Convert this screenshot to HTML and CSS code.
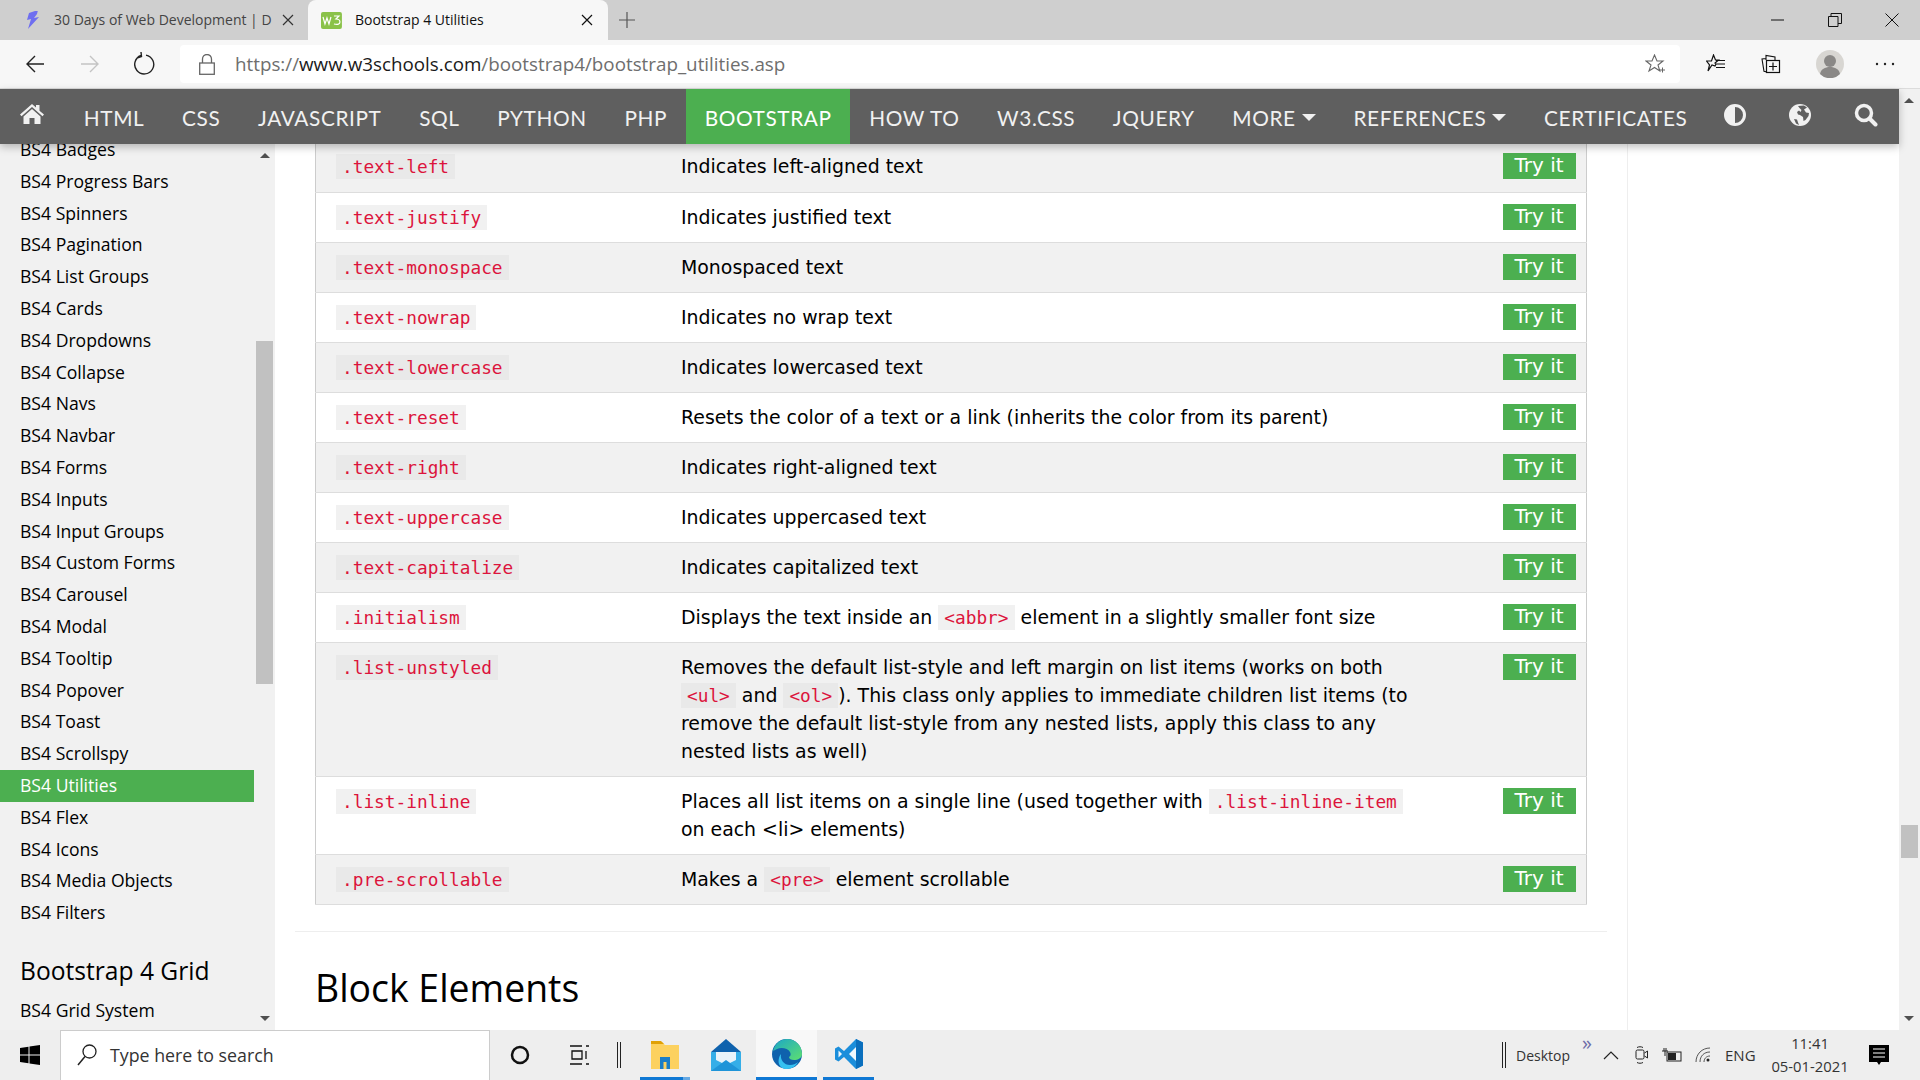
FILE: index.html
```html
<!DOCTYPE html>
<html>
<head>
  <meta charset="utf-8"/>
  <title>Bootstrap 4 Utilities</title>
  <link rel="stylesheet" href="styles.css">
</head>
<body>
  <!-- Browser tab strip -->
  <div class="tabstrip">
    <div class="tab">
      <svg class="tab-icon" width="14" height="18" viewBox="0 0 14 18"><path d="M9 0L3 2 1 9l4-1-3 10 11-12-5 1 3-4 1-4z" fill="#6f6ff0"/></svg>
      <span class="tab-title">30 Days of Web Development | D</span>
      <svg class="tab-close" width="12" height="12" viewBox="0 0 12 12"><path d="M1 1l10 10M11 1L1 11" stroke="#333" stroke-width="1.2"/></svg>
    </div>
    <div class="tab tab-active">
      <svg class="tab-icon" width="21" height="17" viewBox="0 0 21 17"><rect width="21" height="17" rx="2" fill="#8ac249"/><path d="M2 5l2 7 2-6 2 6 2-7M13 4h5l-3 3c3 0 4 1 4 3s-2 3-6 2" fill="none" stroke="#fff" stroke-width="1.2"/></svg>
      <span class="tab-title">Bootstrap 4 Utilities</span>
      <svg class="tab-close" width="12" height="12" viewBox="0 0 12 12"><path d="M1 1l10 10M11 1L1 11" stroke="#111" stroke-width="1.2"/></svg>
    </div>
    <svg class="new-tab" width="16" height="16" viewBox="0 0 16 16"><path d="M8 0v16M0 8h16" stroke="#555" stroke-width="1.2"/></svg>
    <div class="window-btns">
      <svg width="14" height="14" viewBox="0 0 14 14"><path d="M0 7h13" stroke="#111" stroke-width="1"/></svg>
      <svg width="14" height="14" viewBox="0 0 14 14"><path d="M.5 3.5h9.500v10h-9.500zM3 3.500v-3h10.500v10h-3.500" fill="none" stroke="#111"/></svg>
      <svg width="14" height="14" viewBox="0 0 14 14"><path d="M.5.5l13 13M13.500.5l-13 13" stroke="#111"/></svg>
    </div>
  </div>

  <!-- Address bar -->
  <div class="toolbar">
    <svg class="tool-btn" width="20" height="20" viewBox="0 0 20 20"><path d="M19 10H2M10 2l-8 8 8 8" fill="none" stroke="#222" stroke-width="1.400"/></svg>
    <svg class="tool-btn" width="20" height="20" viewBox="0 0 20 20"><path d="M1 10h17M10 2l8 8-8 8" fill="none" stroke="#c4c4c4" stroke-width="1.400"/></svg>
    <svg class="tool-btn" width="22" height="24" viewBox="0 0 22 24"><path d="M7 3.500a9.500 9.500 0 1 0 5-.4M7 0l.5 4.500L3 6" fill="none" stroke="#222" stroke-width="1.400"/></svg>
    <div class="address">
      <svg class="lock" width="16" height="21" viewBox="0 0 16 21"><path d="M3.500 9V5a4.500 4.500 0 0 1 9 0v4" fill="none" stroke="#666" stroke-width="1.300"/><rect x=".7" y="9" width="14.600" height="11.300" fill="none" stroke="#666" stroke-width="1.300"/></svg>
      <span class="url"><span class="url-dim">https://</span>www.w3schools.com<span class="url-dim">/bootstrap4/bootstrap_utilities.asp</span></span>
      <svg class="fav-star" width="20" height="20" viewBox="0 0 20 20"><path d="M9.500 1l2.500 6h6l-5 4 1.800 6-5.300-3.500L4 17l2-6-5-4h6z" fill="none" stroke="#666" stroke-width="1.100"/><path d="M15 16h5M17.500 13.500v5" stroke="#666"/></svg>
    </div>
    <div class="toolbar-right">
      <svg width="20" height="20" viewBox="0 0 20 20"><path d="M7.500 1l2 5h3l-3.500 3 1 1-1 2-3-1-4 6 1.500-6L.5 7h5zM10 6.500h9M10 10h9M10 13.500h9" fill="none" stroke="#111" stroke-width="1.200"/></svg>
      <svg width="20" height="20" viewBox="0 0 20 20"><path d="M5 6V1.500l9 1.500v3M6 18l-3-.7L1 5l4-.5" fill="none" stroke="#111" stroke-width="1.100"/><rect x="5.500" y="6.500" width="13" height="12" fill="none" stroke="#111" stroke-width="1.200"/><path d="M12 8.500v8M8 12.500h8" stroke="#111" stroke-width="1.200"/></svg>
      <svg width="28" height="28" viewBox="0 0 28 28"><circle cx="14" cy="14" r="14" fill="#d8d6d2"/><circle cx="14" cy="11" r="6" fill="#8a8886"/><path d="M4 24c1-5 5-7 10-7s9 2 10 7a14 14 0 0 1-20 0z" fill="#8a8886"/></svg>
      <svg width="20" height="4" viewBox="0 0 20 4"><circle cx="2" cy="2" r="1.200" fill="#222"/><circle cx="10" cy="2" r="1.200" fill="#222"/><circle cx="18" cy="2" r="1.200" fill="#222"/></svg>
    </div>
  </div>

  <div class="viewport">
    <div class="page">
      <!-- Site navigation -->
      <div class="topnav">
        <a class="nav-home"><svg width="24" height="20" viewBox="0 0 24 20"><path d="M12 0l4 3.600V1h3.500v5.700L24 10.600l-1.500 1.700L12 3 1.500 12.300 0 10.600z" fill="#f1f1f1"/><path d="M3.500 12.500L12 5l8.500 7.500V20H14.500v-6h-5v6h-6z" fill="#f1f1f1"/></svg></a>
        <a>HTML</a>
        <a>CSS</a>
        <a>JAVASCRIPT</a>
        <a>SQL</a>
        <a>PYTHON</a>
        <a>PHP</a>
        <a class="active">BOOTSTRAP</a>
        <a>HOW TO</a>
        <a>W3.CSS</a>
        <a>JQUERY</a>
        <a>MORE <span class="caret"></span></a>
        <a>REFERENCES <span class="caret"></span></a>
        <a>CERTIFICATES</a>
        <div class="nav-icons">
          <svg width="22" height="22" viewBox="0 0 22 22"><circle cx="11" cy="11" r="9.500" fill="none" stroke="#f1f1f1" stroke-width="3"/><path d="M11 1a10 10 0 0 0 0 20z" fill="#f1f1f1"/></svg>
          <svg width="22" height="22" viewBox="0 0 22 22"><circle cx="11" cy="11" r="11" fill="#f1f1f1"/><path d="M9 2l6-.5 3 2-3 2 2 3 3 .5-.5 3-3 4-2 1-.5-4-3-2-2-.5-1-2.500 2-1.500 1.500 1.500 1-2-2-2zM5 15l3 .5 1 3 1 2.500-3-1.500z" fill="#5f5f5f"/></svg>
          <svg width="24" height="24" viewBox="0 0 24 24"><circle cx="10" cy="10" r="7.500" fill="none" stroke="#f1f1f1" stroke-width="3.500"/><path d="M15.500 15.500l6 6" stroke="#f1f1f1" stroke-width="4" stroke-linecap="round"/></svg>
        </div>
      </div>

      <div class="page-body">
        <!-- Left menu -->
        <div class="sidebar">
          <div class="side-list">
            <a>BS4 Badges</a>
            <a>BS4 Progress Bars</a>
            <a>BS4 Spinners</a>
            <a>BS4 Pagination</a>
            <a>BS4 List Groups</a>
            <a>BS4 Cards</a>
            <a>BS4 Dropdowns</a>
            <a>BS4 Collapse</a>
            <a>BS4 Navs</a>
            <a>BS4 Navbar</a>
            <a>BS4 Forms</a>
            <a>BS4 Inputs</a>
            <a>BS4 Input Groups</a>
            <a>BS4 Custom Forms</a>
            <a>BS4 Carousel</a>
            <a>BS4 Modal</a>
            <a>BS4 Tooltip</a>
            <a>BS4 Popover</a>
            <a>BS4 Toast</a>
            <a>BS4 Scrollspy</a>
            <a class="active">BS4 Utilities</a>
            <a>BS4 Flex</a>
            <a>BS4 Icons</a>
            <a>BS4 Media Objects</a>
            <a>BS4 Filters</a>
            <h2>Bootstrap 4 Grid</h2>
            <a>BS4 Grid System</a>
          </div>
          <div class="side-scroll">
            <span class="arrow-up"></span>
            <div class="side-thumb"></div>
            <span class="arrow-down"></span>
          </div>
        </div>

        <!-- Main column -->
        <div class="content">
          <table class="ref-table">
            <tr><td class="c1"><code>.text-left</code></td><td class="c2">Indicates left-aligned text</td><td class="c3"><a class="try">Try it</a></td></tr>
            <tr><td class="c1"><code>.text-justify</code></td><td class="c2">Indicates justified text</td><td class="c3"><a class="try">Try it</a></td></tr>
            <tr><td class="c1"><code>.text-monospace</code></td><td class="c2">Monospaced text</td><td class="c3"><a class="try">Try it</a></td></tr>
            <tr><td class="c1"><code>.text-nowrap</code></td><td class="c2">Indicates no wrap text</td><td class="c3"><a class="try">Try it</a></td></tr>
            <tr><td class="c1"><code>.text-lowercase</code></td><td class="c2">Indicates lowercased text</td><td class="c3"><a class="try">Try it</a></td></tr>
            <tr><td class="c1"><code>.text-reset</code></td><td class="c2">Resets the color of a text or a link (inherits the color from its parent)</td><td class="c3"><a class="try">Try it</a></td></tr>
            <tr><td class="c1"><code>.text-right</code></td><td class="c2">Indicates right-aligned text</td><td class="c3"><a class="try">Try it</a></td></tr>
            <tr><td class="c1"><code>.text-uppercase</code></td><td class="c2">Indicates uppercased text</td><td class="c3"><a class="try">Try it</a></td></tr>
            <tr><td class="c1"><code>.text-capitalize</code></td><td class="c2">Indicates capitalized text</td><td class="c3"><a class="try">Try it</a></td></tr>
            <tr><td class="c1"><code>.initialism</code></td><td class="c2">Displays the text inside an <code>&lt;abbr&gt;</code> element in a slightly smaller font size</td><td class="c3"><a class="try">Try it</a></td></tr>
            <tr><td class="c1"><code>.list-unstyled</code></td><td class="c2">Removes the default list-style and left margin on list items (works on both<br><code>&lt;ul&gt;</code> and <code>&lt;ol&gt;</code>). This class only applies to immediate children list items (to<br>remove the default list-style from any nested lists, apply this class to any<br>nested lists as well)</td><td class="c3"><a class="try">Try it</a></td></tr>
            <tr><td class="c1"><code>.list-inline</code></td><td class="c2">Places all list items on a single line (used together with <code>.list-inline-item</code><br>on each &lt;li&gt; elements)</td><td class="c3"><a class="try">Try it</a></td></tr>
            <tr><td class="c1"><code>.pre-scrollable</code></td><td class="c2">Makes a <code>&lt;pre&gt;</code> element scrollable</td><td class="c3"><a class="try">Try it</a></td></tr>
          </table>
          <hr class="rule">
          <h2 class="section-title">Block Elements</h2>
        </div>

        <div class="ad-col"></div>
      </div>
    </div>

    <!-- Page scrollbar -->
    <div class="page-scroll">
      <span class="arrow-up"></span>
      <div class="page-thumb"></div>
      <span class="arrow-down"></span>
    </div>
  </div>

  <!-- Windows taskbar -->
  <div class="taskbar">
    <svg class="start" width="20" height="20" viewBox="0 0 20 20"><path d="M0 3l8.500-1.200v7.700H0zM9.500 1.600L20 0v9.500H9.500zM0 10.500h8.500v7.700L0 17zM9.500 10.500H20V20L9.500 18.400z" fill="#000"/></svg>
    <div class="search-box">
      <svg width="20" height="22" viewBox="0 0 20 22"><circle cx="12.500" cy="7.500" r="6.500" fill="none" stroke="#222" stroke-width="1.300"/><path d="M8 12.500L1 21" stroke="#222" stroke-width="1.500"/></svg>
      <span>Type here to search</span>
    </div>
    <div class="task-slot slot-small"><svg width="20" height="20" viewBox="0 0 20 20"><circle cx="10" cy="10" r="8" fill="none" stroke="#111" stroke-width="2.500"/></svg></div>
    <div class="task-slot slot-small"><svg width="20" height="20" viewBox="0 0 20 20"><path d="M0 1h12M0 19h12M2 6h10v8H2zM16 1h3M16 6v8M16 19h3" fill="none" stroke="#111" stroke-width="1.300"/></svg></div>
    <div class="task-sep"></div>
    <div class="task-slot running slot-explorer"><svg width="28" height="30" viewBox="0 0 28 30"><path d="M0 3h11l3 3h14v24H0z" fill="#fcd15f"/><path d="M0 2h10l3 3H0z" fill="#e0a106"/><path d="M9 30V18h10v12h-3.500v-7h-3v7z" fill="#1b7ec7"/></svg></div>
    <div class="task-slot slot-mail"><svg width="30" height="32" viewBox="0 0 30 32"><path d="M15 0L0 13h30z" fill="#0f62ad"/><path d="M0 13h30v19H0z" fill="#35aee8"/><path d="M5 13h20v8l-10 5-10-5z" fill="#e9f3fa"/><path d="M0 32l15-11 15 11z" fill="#1f94d8"/></svg></div>
    <div class="task-slot running current">
      <svg width="30" height="30" viewBox="0 0 30 30"><defs><linearGradient id="edgeTop" x1="0" y1="0" x2="1" y2="1"><stop offset="0" stop-color="#1aa5c9"/><stop offset="1" stop-color="#5ee06f"/></linearGradient></defs><circle cx="15" cy="15" r="15" fill="#0f62ad"/><path d="M1 12C3 4 9 0 15 0c9 0 15 7 15 15 0 4-4 6-8 6-3 0-5-1-5-3 2-1 2-3 1-5-2-4-9-5-13-3-2 1-4 2-5 2z" fill="url(#edgeTop)"/><path d="M9 15c-1 6 3 11 9 11 3 0 6-1 8-3-2 4-6 7-11 7-4 0-7-2-8-5s0-8 2-10z" fill="#35c1f1"/></svg>
    </div>
    <div class="task-slot running slot-code"><svg width="28" height="30" viewBox="0 0 28 30"><path d="M21 0l7 3.500v23L21 30 9 18l-5.500 4.500L0 20.500v-11L3.500 7.500 9 12z" fill="#1b8edb"/><path d="M21 8l-7 7 7 7z" fill="#f0f8fd"/><path d="M21 0l7 3.500v23L21 30z" fill="#0a6fbd"/><path d="M3.500 11.500v7L7 15z" fill="#f0f8fd"/></svg></div>

    <div class="tray">
      <div class="task-sep"></div>
      <span class="tray-desktop">Desktop</span>
      <span class="tray-more">»</span>
      <svg width="16" height="9" viewBox="0 0 16 9"><path d="M1 8l7-7 7 7" fill="none" stroke="#222" stroke-width="1.200"/></svg>
      <svg width="14" height="18" viewBox="0 0 14 18"><rect x="1" y="4" width="8" height="9" rx="1.500" fill="none" stroke="#222"/><path d="M9.500 7l3-2v7l-3-2M2 1.500c2-1 4-1 6 0M2 16.500c2 1 4 1 6 0" fill="none" stroke="#222"/></svg>
      <svg width="20" height="14" viewBox="0 0 20 14"><rect x="5" y="4" width="14" height="9" fill="none" stroke="#222"/><rect x="6" y="5" width="8" height="7" fill="#222"/><path d="M0 3h6M2 0v3M4 0v3M3 3v5" stroke="#222"/></svg>
      <svg width="16" height="16" viewBox="0 0 16 16"><circle cx="13" cy="13" r="1.500" fill="#222"/><path d="M1 15C1 7 7 1 15 1M5 15c0-6 4-10 10-10M9 15c0-3 2-6 6-6" fill="none" stroke="#555"/></svg>
      <span class="tray-lang">ENG</span>
      <div class="tray-clock"><div>11:41</div><div>05-01-2021</div></div>
      <svg class="tray-note" width="20" height="20" viewBox="0 0 20 20"><path d="M0 0h20v17h-8l-2 3-2-3H0z" fill="#000"/><path d="M4 4h12M4 8h12M4 12h12" stroke="#fff"/></svg>
    </div>
  </div>
</body>
</html>
```

FILE: styles.css
```css
* {
  box-sizing: border-box;
}
html, body {
  margin: 0;
  padding: 0;
  height: 100%;
  overflow: hidden;
}
body {
  display: flex;
  flex-direction: column;
  height: 1080px;
  font-family: "Open Sans", sans-serif;
  color: #000;
  background: #fff;
}

/* Browser tabs */
.tabstrip {
  height: 40px;
  flex: none;
  display: flex;
  align-items: center;
  background: #cfcfcf;
}
.tab {
  height: 40px;
  width: 308px;
  display: flex;
  align-items: center;
  padding: 0 14px 0 26px;
  font-size: 14px;
  color: #444;
}
.tab .tab-title {
  width: 218px;
  margin: 0 10px 2px 14px;
  overflow: hidden;
  white-space: nowrap;
}
.tab-active {
  width: 300px;
  padding: 0 15px 0 13px;
  background: #f7f7f7;
  border-radius: 8px 8px 0 0;
  color: #111;
}
.tab-active .tab-title {
  width: 227px;
  margin: 0 0 2px 13px;
}
.tab-close {
  flex: none;
}
.new-tab {
  margin-left: 11px;
}
.window-btns {
  margin-left: auto;
  display: flex;
  gap: 43px;
  padding-right: 21px;
  align-items: center;
}

/* Address bar */
.toolbar {
  height: 49px;
  flex: none;
  display: flex;
  align-items: center;
  background: #f7f7f7;
  border-bottom: 1px solid #dcdcdc;
  padding-left: 25px;
}
.tool-btn {
  margin-right: 35px;
}
.tool-btn:nth-child(3) {
  margin-right: 0;
  margin-left: -1px;
}
.address {
  margin-left: 24px;
  width: 1500px;
  height: 38px;
  background: #fff;
  border-radius: 4px;
  display: flex;
  align-items: center;
  padding: 0 15px 0 19px;
}
.url {
  margin-left: 20px;
  font-size: 18.800px;
  color: #1a1a1a;
}
.url-dim {
  color: #6e6e6e;
}
.fav-star {
  margin-left: auto;
}
.toolbar-right {
  flex: 1;
  display: flex;
  align-items: center;
  padding-left: 26px;
  gap: 35px;
}
.toolbar-right svg:last-child {
  margin-left: -4px;
}

/* Page area */
.viewport {
  flex: 1;
  min-height: 0;
  display: flex;
}
.page {
  flex: 1;
  min-width: 0;
  display: flex;
  flex-direction: column;
}
.topnav {
  height: 55px;
  flex: none;
  position: relative;
  z-index: 2;
  display: flex;
  align-items: stretch;
  background: #5f5f5f;
  box-shadow: 0 3px 8px rgba(0, 0, 0, 0.25);
}
.topnav a {
  display: flex;
  align-items: center;
  gap: 6px;
  padding: 2px 18.850px 0;
  font-size: 20.800px;
  font-family: "Lato", sans-serif;
  letter-spacing: 0.6px;
  color: #f1f1f1;
  white-space: nowrap;
}
.topnav a.active {
  background: #4caf50;
  color: #fff;
}
.topnav a.nav-home {
  padding: 0 21px 6px 20px;
}
.caret {
  width: 0;
  height: 0;
  border-left: 7px solid transparent;
  border-right: 7px solid transparent;
  border-top: 7px solid #f1f1f1;
}
.nav-icons {
  margin-left: auto;
  display: flex;
  align-items: center;
  gap: 43px;
  padding: 0 21px 3px 0;
}
.page-body {
  flex: 1;
  min-height: 0;
  display: flex;
  overflow: hidden;
}

/* Left menu */
.sidebar {
  width: 275px;
  flex: none;
  display: flex;
  background: #f1f1f1;
  overflow: hidden;
}
.side-list {
  width: 254px;
  flex: none;
  margin-top: -10px;
}
.side-list a {
  display: block;
  height: 31.800px;
  line-height: 31px;
  padding-left: 20px;
  font-size: 17.600px;
  color: #000;
  white-space: nowrap;
}
.side-list a.active {
  background: #4caf50;
  color: #fff;
}
.side-list h2 {
  margin: 22px 0 4px;
  padding-left: 20px;
  font-size: 24.600px;
  line-height: 40px;
  font-weight: 400;
}
.side-scroll {
  position: relative;
  width: 21px;
  margin-left: 2px;
}
.side-thumb {
  position: absolute;
  left: 0;
  top: 197px;
  width: 17px;
  height: 343px;
  background: #c1c1c1;
}
.arrow-up, .arrow-down {
  position: absolute;
  width: 0;
  height: 0;
  border-left: 5px solid transparent;
  border-right: 5px solid transparent;
}
.arrow-up {
  top: 9px;
  border-bottom: 5px solid #505050;
}
.arrow-down {
  bottom: 9px;
  border-top: 5px solid #505050;
}
.side-scroll .arrow-up, .side-scroll .arrow-down {
  left: 4px;
}

/* Main column */
.content {
  width: 1352px;
  flex: none;
  padding: 0 20px 0 20px;
}
.ad-col {
  flex: 1;
  border-left: 1px solid #eee;
}
.ref-table {
  width: 1272px;
  margin: -2px 0 0 20px;
  border-collapse: collapse;
  border-left: 1px solid #ccc;
  border-right: 1px solid #ccc;
  font-family: "DejaVu Sans", sans-serif;
  font-size: 18.900px;
  line-height: 28px;
}
.ref-table tr {
  border-bottom: 1px solid #ddd;
}
.ref-table tr:nth-child(odd) {
  background: #f1f1f1;
}
.ref-table td {
  height: 50px;
  padding: 10px 0 11px;
  vertical-align: top;
}
.ref-table .c1 {
  width: 365.500px;
  padding-left: 20px;
}
.ref-table .c2 {
  white-space: nowrap;
}
.ref-table .c3 {
  width: 84px;
}
code {
  font-family: "DejaVu Sans Mono", monospace;
  font-size: 17.800px;
  line-height: 1;
  color: #dc143c;
  background: #f1f1f1;
  padding: 2px 6px;
}
tr:nth-child(odd) .c2 code, tr:nth-child(odd) .c1 code {
  background: #e9e9e9;
}
.try {
  display: block;
  width: 73px;
  height: 26px;
  margin-top: 1px;
  background: #4caf50;
  color: #fff;
  font-size: 20px;
  line-height: 25px;
  text-align: center;
}
.rule {
  margin: 26px 0 0;
  border: 0;
  border-top: 1px solid #eee;
}
.section-title {
  margin: 26px 0 0 20px;
  font-size: 37.400px;
  line-height: 60px;
  font-weight: 400;
}

/* Page scrollbar */
.page-scroll {
  position: relative;
  width: 21px;
  flex: none;
  background: #f1f1f1;
}
.page-scroll .arrow-up, .page-scroll .arrow-down {
  left: 5px;
}
.page-thumb {
  position: absolute;
  left: 2px;
  top: 736px;
  width: 17px;
  height: 33px;
  background: #c1c1c1;
}

/* Taskbar */
.taskbar {
  height: 50px;
  flex: none;
  display: flex;
  align-items: center;
  background: #eeeeee;
}
.start {
  margin-left: 20px;
}
.search-box {
  width: 430px;
  height: 50px;
  margin-left: 20px;
  display: flex;
  align-items: center;
  gap: 13px;
  padding: 0 0 2px 16px;
  background: #fff;
  border: 1px solid #ccc;
  border-bottom: 0;
  font-size: 17.800px;
  color: #333;
}
.task-slot {
  width: 61px;
  height: 50px;
  display: flex;
  align-items: center;
  justify-content: center;
}
.slot-small {
  width: 60px;
}
.slot-small:first-of-type {
  margin-left: 1px;
}
.slot-explorer {
  width: 50px;
  margin: 0 5px 0 6px;
}
.slot-code {
  width: 51px;
  margin-left: 6px;
}
.task-sep {
  width: 4px;
  height: 26px;
  margin: 0 13px 0 7px;
  border-left: 1px solid #222;
  border-right: 1px solid #222;
}
.running {
  border-bottom: 3px solid #0f78d4;
}
.slot-explorer.running {
  border-image: linear-gradient(90deg, #0f78d4 85%, #66a9e3 85%) 1;
}
.current {
  background: #f8f8f8;
}
.tray {
  margin-left: auto;
  display: flex;
  align-items: center;
  font-size: 14px;
  color: #333;
}
.tray svg {
  flex: none;
}
.tray-desktop {
  margin-left: -3px;
  width: 66px;
}
.tray-more {
  width: 21px;
  margin-bottom: 26px;
  color: #6d6da8;
  font-size: 20px;
}
.tray > svg:nth-of-type(1) {
  margin-right: 16px;
}
.tray > svg:nth-of-type(2) {
  margin-right: 13px;
}
.tray > svg:nth-of-type(3) {
  margin-right: 13px;
}
.tray-lang {
  margin-left: 14px;
  font-size: 15px;
  width: 36px;
}
.tray-clock {
  width: 98px;
  text-align: center;
  font-size: 14.800px;
  line-height: 23px;
  margin-right: 10px;
}
.tray-note {
  margin-right: 31px;
}
```
